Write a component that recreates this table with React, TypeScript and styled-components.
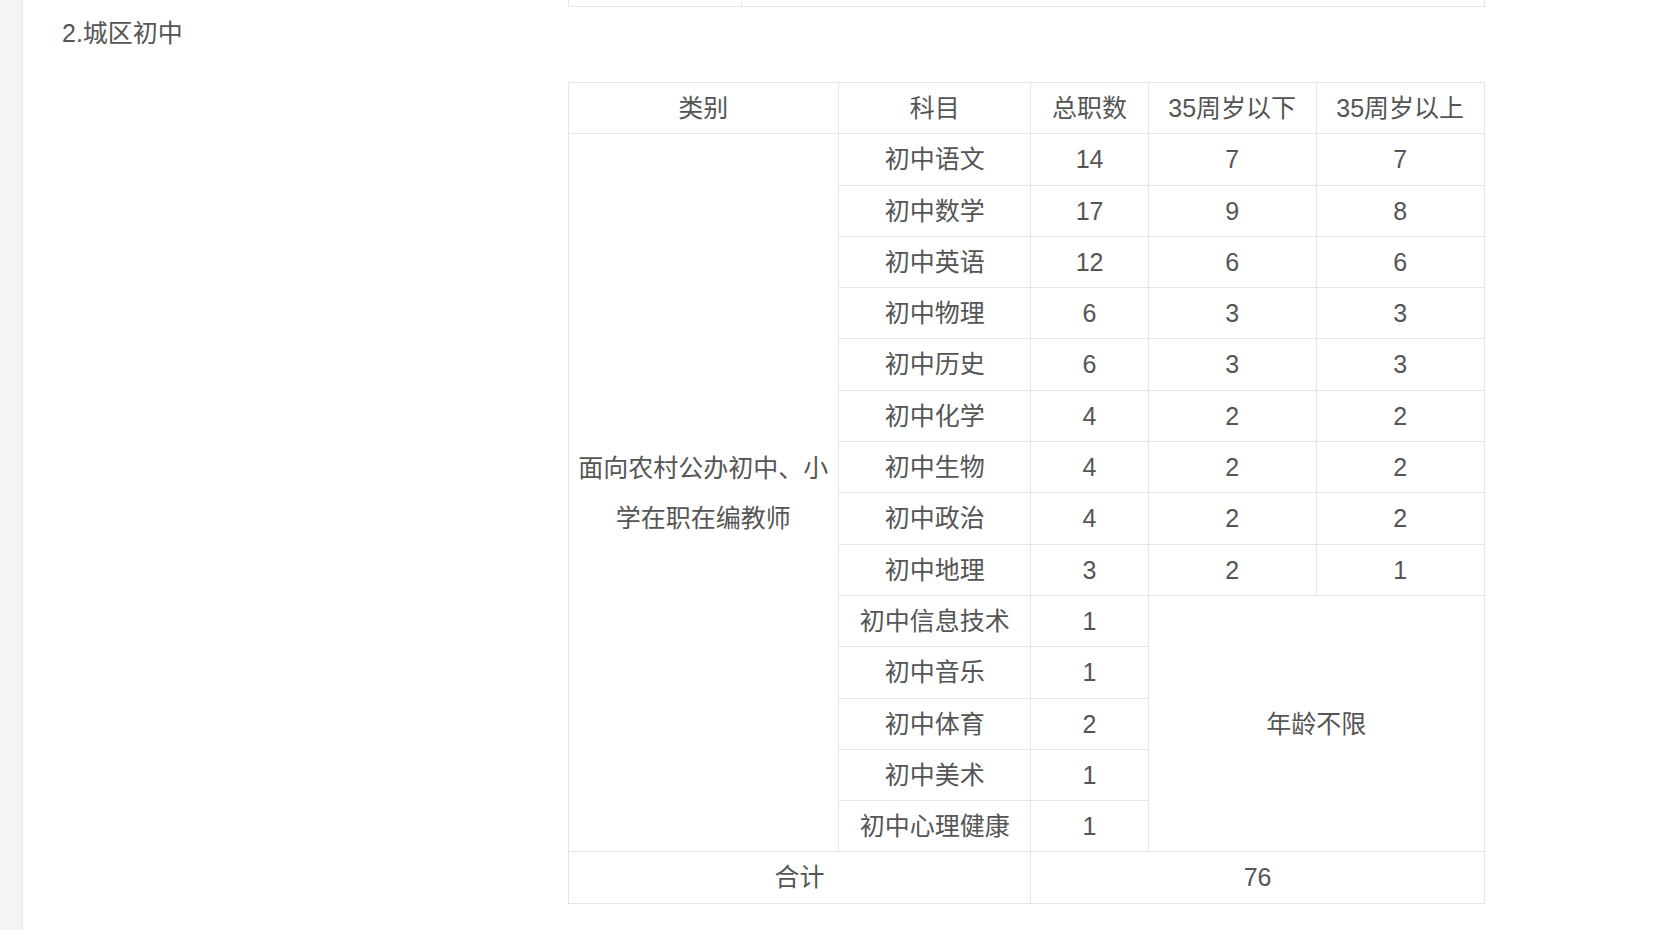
import React from "react";
import styled, { createGlobalStyle } from "styled-components";

const GlobalStyle = createGlobalStyle`
	html, body {
		margin: 0;
		padding: 0;
		background: #ffffff;
	}
	body {
		font-family: "Liberation Sans", "Noto Sans CJK SC", sans-serif;
		color: #555555;
	}
`;

type Row = { subject: string; total: number; under?: number; over?: number };

const rows: Row[] = [
	{ subject: "初中语文", total: 14, under: 7, over: 7 },
	{ subject: "初中数学", total: 17, under: 9, over: 8 },
	{ subject: "初中英语", total: 12, under: 6, over: 6 },
	{ subject: "初中物理", total: 6, under: 3, over: 3 },
	{ subject: "初中历史", total: 6, under: 3, over: 3 },
	{ subject: "初中化学", total: 4, under: 2, over: 2 },
	{ subject: "初中生物", total: 4, under: 2, over: 2 },
	{ subject: "初中政治", total: 4, under: 2, over: 2 },
	{ subject: "初中地理", total: 3, under: 2, over: 1 },
	{ subject: "初中信息技术", total: 1 },
	{ subject: "初中音乐", total: 1 },
	{ subject: "初中体育", total: 2 },
	{ subject: "初中美术", total: 1 },
	{ subject: "初中心理健康", total: 1 },
];

const firstUnlimited = rows.findIndex((r) => r.under === undefined);
const unlimitedCount = rows.length - firstUnlimited;

export default function App() {
	return (
		<>
			<GlobalStyle />
			<Page>
				<SideStrip />
				<Content>
					<PrevTail>
						<PrevCell $width={172} />
						<PrevCell />
					</PrevTail>
					<Heading>2.城区初中</Heading>
					<Table>
						<colgroup>
							<col style={{ width: 270.5 }} />
							<col style={{ width: 192.4 }} />
							<col style={{ width: 117.3 }} />
							<col style={{ width: 168 }} />
							<col style={{ width: 168 }} />
						</colgroup>
						<tbody>
							<tr>
								<Cell>类别</Cell>
								<Cell>科目</Cell>
								<Cell>总职数</Cell>
								<Cell>35周岁以下</Cell>
								<Cell>35周岁以上</Cell>
							</tr>
							{rows.map((r, i) => (
								<tr key={r.subject}>
									{i === 0 && (
										<Cell rowSpan={rows.length}>面向农村公办初中、小学在职在编教师</Cell>
									)}
									<Cell>{r.subject}</Cell>
									<Cell>{r.total}</Cell>
									{r.under !== undefined ? (
										<>
											<Cell>{r.under}</Cell>
											<Cell>{r.over}</Cell>
										</>
									) : (
										i === firstUnlimited && (
											<Cell rowSpan={unlimitedCount} colSpan={2}>
												年龄不限
											</Cell>
										)
									)}
								</tr>
							))}
							<tr>
								<Cell colSpan={2}>合计</Cell>
								<Cell colSpan={3}>76</Cell>
							</tr>
						</tbody>
					</Table>
				</Content>
			</Page>
		</>
	);
}

const Page = styled.div`
	display: flex;
	min-height: 930px;
`;

const SideStrip = styled.div`
	flex: 0 0 22px;
	background: #f4f4f4;
	border-right: 1px solid #e8e8e8;
`;

const Content = styled.div`
	flex: 1;
	display: flex;
	flex-direction: column;
	align-items: flex-start;
`;

const PrevTail = styled.div`
	display: flex;
	width: 917px;
	height: 7px;
	margin-left: 544.5px;
	box-sizing: border-box;
	border: 1px solid #e6e6e6;
	border-top: none;
`;

const PrevCell = styled.div<{ $width?: number }>`
	flex: ${(p) => (p.$width ? `0 0 ${p.$width}px` : "1")};
	border-right: ${(p) => (p.$width ? "1px solid #e6e6e6" : "none")};
`;

const Heading = styled.p`
	margin: 6px 0 0 39px;
	font-size: 25px;
	line-height: 40px;
	color: #555555;
`;

const Table = styled.table`
	margin: 29px 0 0 544.5px;
	width: 917px;
	table-layout: fixed;
	border-collapse: collapse;
`;

const Cell = styled.td`
	border: 1px solid #e6e6e6;
	padding: 0 6px;
	font-size: 25px;
	line-height: 50.3px;
	text-align: center;
	vertical-align: middle;
	color: #555555;
`;
